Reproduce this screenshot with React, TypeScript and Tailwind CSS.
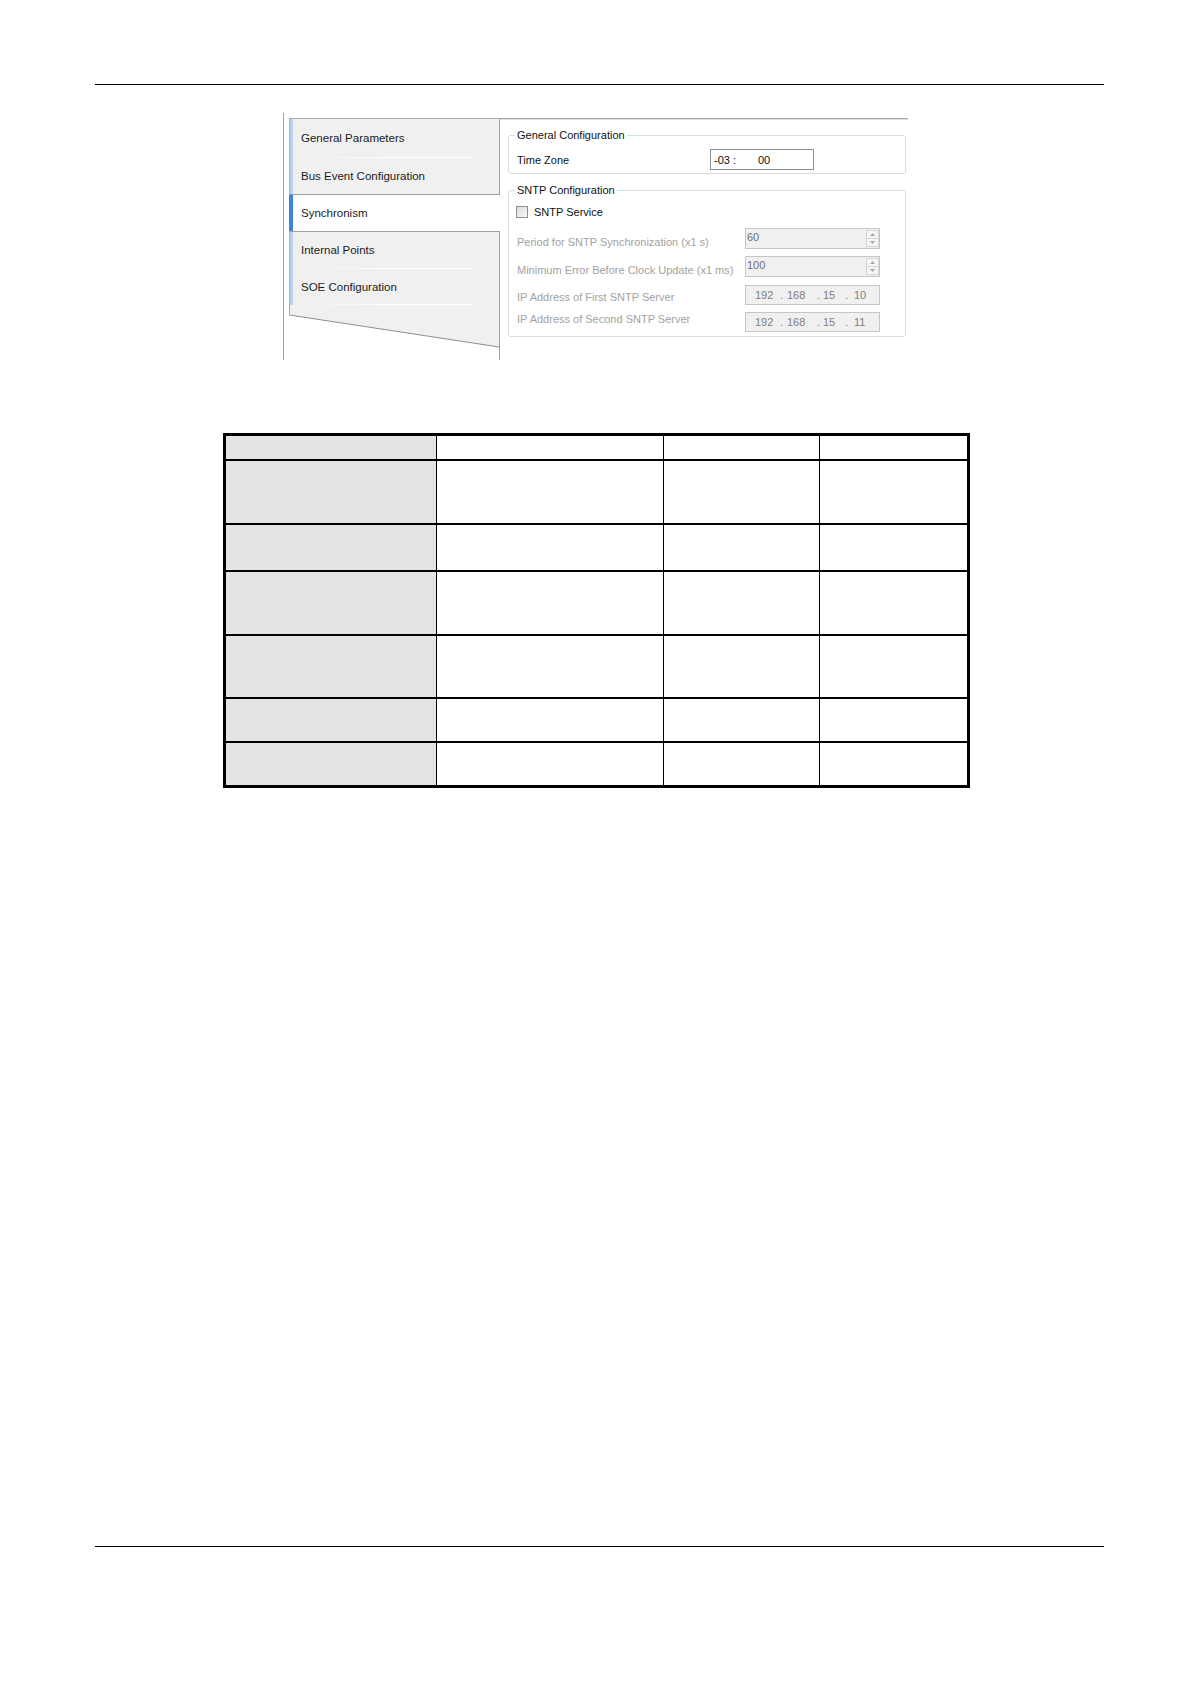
import clsx from "clsx";

const UI_FONT = "font-['Liberation_Sans',Arial,sans-serif] text-[11px] leading-[14px]";

type TabEdge = "sep" | "border";

function Tab({
  label,
  heightClass,
  edge,
  selected = false,
}: {
  label: string;
  heightClass: string;
  edge: TabEdge;
  selected?: boolean;
}) {
  return (
    <div
      className={clsx(
        "flex",
        heightClass,
        selected ? "bg-white" : "border-r border-[#a0a0a0]",
        edge === "border" && "border-b border-[#a0a0a0]"
      )}
    >
      <div
        className={clsx(
          "w-[4px]",
          selected ? "bg-[#3d86de]" : "bg-gradient-to-r from-[#92bbec] to-[#c9ddf5]"
        )}
      />
      <div className="flex flex-1 flex-col">
        <div className="flex flex-1 items-center pl-[8px] text-[11.5px] text-[#1b1b1b]">{label}</div>
        {edge === "sep" && (
          <div className="ml-[10px] mr-[26px] h-px bg-gradient-to-r from-[#f0f0f0] via-white to-white" />
        )}
      </div>
    </div>
  );
}

function Spinner() {
  return (
    <div className="my-[1px] flex w-[13px] flex-col">
      <div className="flex flex-1 items-center justify-center border border-[#d6d6d6] bg-[#f6f6f6]">
        <svg width="5" height="3" viewBox="0 0 5 3">
          <polygon points="0,3 2.5,0 5,3" fill="#a8a8a8" />
        </svg>
      </div>
      <div className="flex flex-1 items-center justify-center border border-t-0 border-[#d6d6d6] bg-[#f6f6f6]">
        <svg width="5" height="3" viewBox="0 0 5 3">
          <polygon points="0,0 2.5,3 5,0" fill="#a8a8a8" />
        </svg>
      </div>
    </div>
  );
}

function NumberBox({ value }: { value: string }) {
  return (
    <div className="flex h-[21px] w-[135px] border border-[#c6c6c6] bg-[#f0f0f0]">
      <div className="flex-1 pl-[1px] pt-[1px] text-[#707070]">{value}</div>
      <Spinner />
    </div>
  );
}

function IpBox({ last }: { last: string }) {
  return (
    <div className="flex h-[20px] w-[135px] items-center border border-[#c6c6c6] bg-[#f0f0f0] pl-[9px] text-[#808080]">
      <span className="w-[25px]">192</span>
      <span className="w-[7px]">.</span>
      <span className="w-[30px]">168</span>
      <span className="w-[6px]">.</span>
      <span className="w-[22px]">15</span>
      <span className="w-[9px]">.</span>
      <span>{last}</span>
    </div>
  );
}

function Group({ title, className, children }: { title: string; className?: string; children: React.ReactNode }) {
  return (
    <fieldset className={clsx("ml-[8px] mr-[2px] rounded-[3px] border border-[#d7dfe4]", className)}>
      <legend className="ml-[6px] px-[2px] text-[#111]">{title}</legend>
      {children}
    </fieldset>
  );
}

function SettingsShot() {
  return (
    <div className={clsx("ml-[283px] flex h-[247px] w-[625px] border-l border-[#a3a3a3] pl-[5px] pt-[5px]", UI_FONT)}>
      <div className="flex flex-1 border-t border-[#ababab]">
        {/* tab strip */}
        <div className="flex w-[211px] flex-col bg-[#f0f0f0]">
          <Tab label="General Parameters" heightClass="h-[39px]" edge="sep" />
          <Tab label="Bus Event Configuration" heightClass="h-[37px]" edge="border" />
          <Tab label="Synchronism" heightClass="h-[37px]" edge="border" selected />
          <Tab label="Internal Points" heightClass="h-[37px]" edge="sep" />
          <Tab label="SOE Configuration" heightClass="h-[36px]" edge="sep" />
          <div className="flex-1 bg-white">
            <svg width="211" height="55" viewBox="0 0 211 55" className="block">
              <polygon points="0,0 210,0 210,42 0,10" fill="#f0f0f0" />
              <line x1="0.5" y1="0" x2="0.5" y2="10" stroke="#a8a8a8" />
              <line x1="0.5" y1="10" x2="210" y2="42" stroke="#8f8f8f" />
              <line x1="210.5" y1="0" x2="210.5" y2="55" stroke="#a0a0a0" />
            </svg>
          </div>
        </div>

        {/* content */}
        <div className="flex-1 border-t border-[#dedede] bg-white pt-[8px]">
          <Group title="General Configuration">
            <div className="flex pb-[3px] pl-[8px] pt-[7px]">
              <div className="w-[193px] self-center text-[#111]">Time Zone</div>
              <div className="flex h-[21px] w-[104px] items-center border border-[#8f9090] pl-[3px] text-[#111]">
                <span className="w-[44px]">-03 :</span>
                <span>00</span>
              </div>
            </div>
          </Group>

          <Group title="SNTP Configuration" className="mt-[9px]">
            <div className="pb-[4px] pl-[8px] pt-[8px]">
              <div className="flex h-[14px] items-center">
                <div className="-ml-[1px] h-[12px] w-[12px] border border-[#8e8f8f] bg-gradient-to-br from-[#dcdcdc] to-[#f8f8f8]" />
                <span className="ml-[6px] text-[#111]">SNTP Service</span>
              </div>
              <div className="flex">
                <div className="flex w-[228px] flex-col text-[#a2a2a2]">
                  <div className="mt-[16px]">Period for SNTP Synchronization (x1 s)</div>
                  <div className="mt-[14px]">Minimum Error Before Clock Update (x1 ms)</div>
                  <div className="mt-[13px]">IP Address of First SNTP Server</div>
                  <div className="mt-[8px]">IP Address of Second SNTP Server</div>
                </div>
                <div className="flex flex-col">
                  <div className="mt-[9px]">
                    <NumberBox value="60" />
                  </div>
                  <div className="mt-[7px]">
                    <NumberBox value="100" />
                  </div>
                  <div className="mt-[8px]">
                    <IpBox last="10" />
                  </div>
                  <div className="mt-[7px]">
                    <IpBox last="11" />
                  </div>
                </div>
              </div>
            </div>
          </Group>
        </div>
      </div>
    </div>
  );
}

const ROW_HEIGHTS = ["h-[23px]", "h-[62px]", "h-[45px]", "h-[62px]", "h-[61px]", "h-[42px]", "h-[42px]"];

function BlankTable() {
  return (
    <div className="ml-[223px] w-[747px] border-[3px] border-black">
      {ROW_HEIGHTS.map((h, i) => (
        <div
          key={i}
          className={clsx("box-content flex", h, i < ROW_HEIGHTS.length - 1 && "border-b-2 border-black")}
        >
          <div className="w-[211px] border-r border-black bg-[#e4e4e4]" />
          <div className="w-[227px] border-r border-black" />
          <div className="w-[156px] border-r border-black" />
          <div className="flex-1" />
        </div>
      ))}
    </div>
  );
}

export default function App() {
  return (
    <div className="flex h-[1683px] w-[1191px] flex-col bg-white pt-[84px]">
      <div className="ml-[95px] h-px w-[1009px] bg-black" />

      <div className="mt-[28px]">
        <SettingsShot />
      </div>

      <div className="mt-[73px]">
        <BlankTable />
      </div>

      <div className="mb-[136px] ml-[95px] mt-auto h-px w-[1009px] bg-black" />
    </div>
  );
}
